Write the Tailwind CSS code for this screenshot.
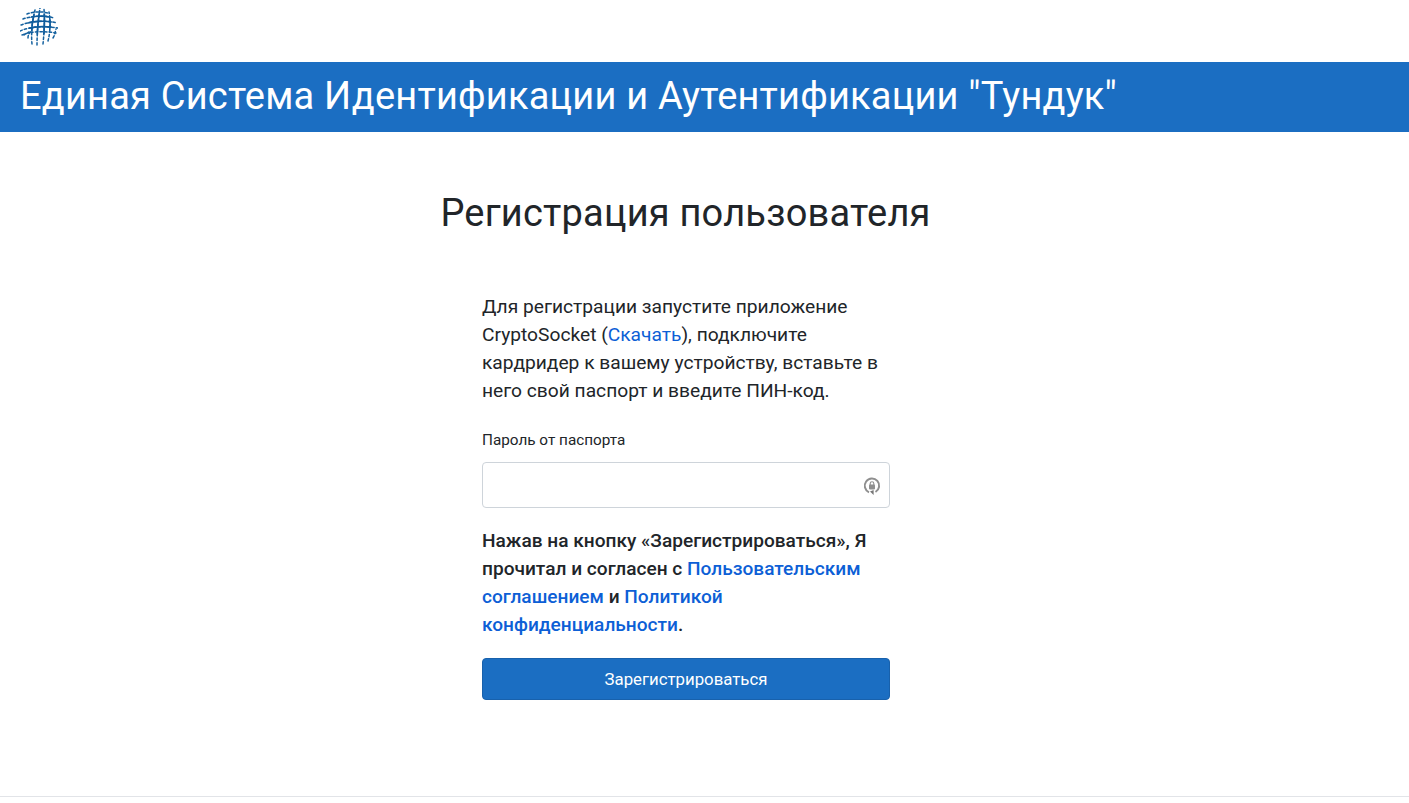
<!DOCTYPE html>
<html lang="ru">
<head>
    <meta charset="UTF-8">
    <title>Тундук</title>
    <script src="https://cdn.jsdelivr.net/npm/@tailwindcss/browser@4"></script>
</head>
<body class="bg-white font-['Roboto',sans-serif] text-[#212529] h-[803px] overflow-hidden">
    <!-- Logo -->
    <div class="h-[62px] pl-5 pt-2">
        <svg width="38" height="38" viewBox="0 0 38 38" fill="none" stroke="#14619f" stroke-linecap="round">
            <defs>
                <clipPath id="globe-core"><ellipse cx="20" cy="16" rx="12" ry="11"/></clipPath>
            </defs>
            <!-- outer dots and dashes -->
            <g stroke-width="1.5" stroke-dasharray="2.4 2.2">
                <path d="M7 6C13 4 20 3 28 5"/>
                <path d="M3 11C11 8 24 7 34 10"/>
                <path d="M1 17C11 13 26 12 37 15"/>
                <path d="M0 23C11 18 26 18 38 20"/>
                <path d="M2 27C11 23 24 23 36 25"/>
                <path d="M12 36C11 27 12 13 15 2"/>
                <path d="M17 37C17 27 18 12 20 0"/>
                <path d="M23 36C24 26 25 13 24 1"/>
                <path d="M28 33C30 25 31 15 29 4"/>
                <path d="M8 30C8 27 9 25 12 22"/>
                <path d="M4 27C5 26 7 25 9 24"/>
                <path d="M33 30C35 27 35 24 36 21"/>
            </g>
            <!-- dense centre -->
            <g clip-path="url(#globe-core)" stroke-width="1.7" stroke="#0f5c9c">
                <path d="M3 11C11 8 24 7 34 10"/>
                <path d="M1 17C11 13 26 12 37 15"/>
                <path d="M0 23C11 18 26 18 38 20"/>
                <path d="M12 36C11 27 12 13 15 2"/>
                <path d="M17 37C17 27 18 12 20 0"/>
                <path d="M23 36C24 26 25 13 24 1"/>
                <path d="M28 33C30 25 31 15 29 4"/>
            </g>
        </svg>
    </div>

    <!-- Banner -->
    <header class="h-[70px] bg-[#1b6ec2] flex items-center pl-5">
        <h1 class="text-[38px] leading-none text-white tracking-[0.2px] -mt-[2px]">Единая Система Идентификации и Аутентификации "Тундук"</h1>
    </header>

    <main class="flex flex-col items-center">
        <h2 class="mt-[58px] text-[38px] leading-[46px] tracking-[0.2px] -ml-[38px]">Регистрация пользователя</h2>

        <div class="w-[408px] mt-[57px] -ml-[37px]">
            <p class="text-[19.2px] leading-7">Для регистрации запустите приложение CryptoSocket (<a href="#" class="text-[#0d5fd6]">Скачать</a>), подключите кардридер к вашему устройству, вставьте в него свой паспорт и введите ПИН-код.</p>

            <label class="block mt-[25px] text-[15.3px] leading-[21px]">Пароль от паспорта</label>
            <div class="relative mt-[11px]">
                <input type="password" class="block w-full h-[46px] border border-[#ced4da] rounded bg-white">
                <!-- lock in a circular arrow -->
                <svg class="absolute right-[8px] top-[14px]" width="20" height="20" viewBox="0 0 20 20" fill="none">
                    <path d="M7 16.3A7.2 7.2 0 1 1 13.5 16" stroke="#8f8f8f" stroke-width="2"/>
                    <path d="M8 15.6l3.6-1.6v5z" fill="#777777"/>
                    <rect x="7" y="8.6" width="6" height="4.8" rx="0.8" fill="#8f8f8f"/>
                    <path d="M8.2 9V7.6a1.8 1.8 0 0 1 3.6 0V9" stroke="#8f8f8f" stroke-width="1.1"/>
                </svg>
            </div>

            <p class="mt-[19px] text-[19.1px] leading-7 font-medium">Нажав на кнопку «Зарегистрироваться», Я прочитал и согласен с <a href="#" class="text-[#0d5fd6]">Пользовательским соглашением</a> и <a href="#" class="text-[#0d5fd6]">Политикой конфиденциальности</a>.</p>

            <button class="block w-full h-[42px] mt-[19px] pt-[1px] rounded bg-[#1b6ec2] border border-[#1861ac] text-white text-[16.8px]">Зарегистрироваться</button>
        </div>
    </main>

    <footer class="absolute left-0 right-0 top-[796px] border-t border-[#e2e4e8]"></footer>
</body>
</html>
